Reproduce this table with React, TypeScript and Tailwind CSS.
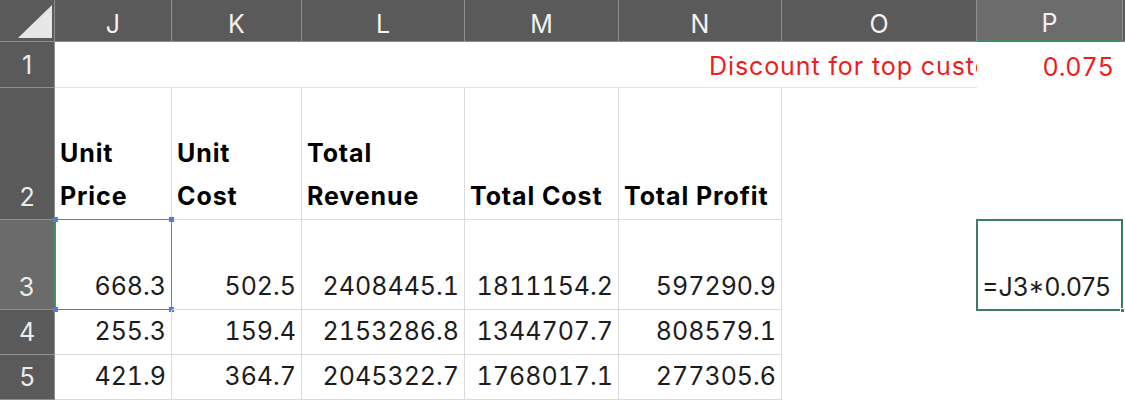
const GRID =
  "grid grid-cols-[55px_117px_130px_163px_154px_163px_195px_146px_1fr] grid-rows-[42px_46px_132px_90px_45px_45px]";

const colHead =
  "flex items-end justify-center pb-[2px] leading-[30px] bg-[#5a5a5a] text-[#f2f2f2] border-r border-b border-[#8e8e8e]";
const rowHead =
  "flex items-end justify-center pb-[7px] leading-[30px] bg-[#5a5a5a] text-[#ececec] border-r border-b border-[#8e8e8e]";
const cell =
  "flex items-end px-[5px] pb-[8px] leading-[30px] tabular-nums border-r border-b border-[#dadada] whitespace-nowrap";
const label =
  "flex items-end px-[5px] pb-[1px] leading-[43px] tracking-[0.9px] border-r border-b border-[#dadada] font-bold text-black whitespace-nowrap";

const rows = [
  { n: "3", v: ["668.3", "502.5", "2408445.1", "1811154.2", "597290.9"] },
  { n: "4", v: ["255.3", "159.4", "2153286.8", "1344707.7", "808579.1"] },
  { n: "5", v: ["421.9", "364.7", "2045322.7", "1768017.1", "277305.6"] },
];

export default function App() {
  return (
    <div className="w-[1125px] h-[401px] overflow-hidden bg-white font-['Inter',sans-serif] text-[25px] text-[#1c1c1c]">
      <div className={GRID}>
        {/* column headers */}
        <div className="bg-[#5a5a5a] border-r border-b border-[#8e8e8e]">
          <svg width="55" height="42" viewBox="0 0 55 42" className="block">
            <polygon points="18,38 52,38 52,5" fill="#e6e6e6" />
          </svg>
        </div>
        {["J", "K", "L", "M", "N", "O"].map((c) => (
          <div key={c} className={colHead}>
            {c}
          </div>
        ))}
        <div className="flex items-end justify-center pb-[2px] leading-[30px] bg-[#6c6c6c] text-[#f2f2f2] border-r border-[#8e8e8e] border-b-2 border-b-[#3f8a63]">
          P
        </div>
        <div className="bg-[#5a5a5a] border-b border-[#8e8e8e]" />

        {/* row 1 */}
        <div className={rowHead + " pb-[6px]"}>1</div>
        <div className="col-span-6 overflow-hidden border-b border-[#e4e4e4]">
          <div className="flex items-end h-full pb-[6px] pl-[654px] leading-[30px] tracking-[0.9px] whitespace-nowrap text-[#f01c1c]">
            <span className="block w-[268px] overflow-hidden">Discount for top customers</span>
          </div>
        </div>
        <div className="flex items-end justify-end pr-[9px] pb-[6px] leading-[30px] tabular-nums text-[#f01c1c]">
          0.075
        </div>
        <div />

        {/* row 2 */}
        <div className={rowHead}>2</div>
        <div className={label}>
          <span>
            Unit
            <br />
            Price
          </span>
        </div>
        <div className={label}>
          <span>
            Unit
            <br />
            Cost
          </span>
        </div>
        <div className={label}>
          <span>
            Total
            <br />
            Revenue
          </span>
        </div>
        <div className={label}>Total Cost</div>
        <div className={label}>Total Profit</div>
        <div />
        <div />
        <div />

        {/* rows 3-5 */}
        {rows.map((r) => (
          <Row key={r.n} n={r.n} v={r.v} />
        ))}
      </div>
    </div>
  );
}

function Row({ n, v }: { n: string; v: string[] }) {
  const active = n === "3";
  return (
    <>
      <div
        className={
          active
            ? "flex items-end justify-center pb-[7px] leading-[30px] bg-[#6b6b6b] text-[#ececec] border-b border-[#8e8e8e] border-r-2 border-r-[#3f8a63]"
            : rowHead
        }
      >
        {n}
      </div>
      {v.map((x, i) => (
        <div key={i} className={cell + " justify-end relative"}>
          {x}
          {active && i === 0 && <RefBox />}
        </div>
      ))}
      <div />
      <div className="relative flex items-end px-[5px] pb-[8px] leading-[30px] whitespace-nowrap">
        {active && (
          <>
            =J3*0.075
            <div className="absolute -top-px -left-px right-0 -bottom-px border-2 border-[#3d7c5e]" />
            <div className="absolute -right-[2px] -bottom-[3px] w-[5px] h-[5px] bg-[#3d7c5e] border border-white" />
          </>
        )}
      </div>
      <div />
    </>
  );
}

function RefBox() {
  return (
    <>
      <div className="absolute -top-px left-0 -right-px -bottom-px border border-[#4d7fd4]" />
      <span className="absolute -top-[3px] -left-[2px] w-[5px] h-[5px] bg-[#4d7fd4]" />
      <span className="absolute -top-[3px] -right-[3px] w-[5px] h-[5px] bg-[#4d7fd4]" />
      <span className="absolute -bottom-[3px] -left-[2px] w-[5px] h-[5px] bg-[#4d7fd4]" />
      <span className="absolute -bottom-[3px] -right-[3px] w-[5px] h-[5px] bg-[#4d7fd4]" />
    </>
  );
}
